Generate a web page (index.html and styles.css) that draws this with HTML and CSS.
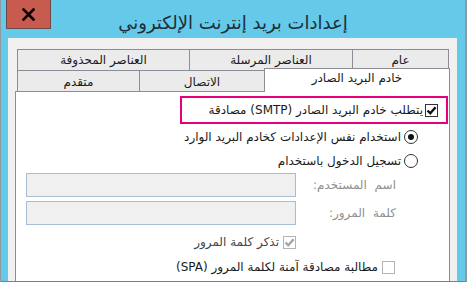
FILE: index.html
```html
<!DOCTYPE html>
<html lang="ar">
<head>
<meta charset="utf-8">
<title>إعدادات بريد إنترنت الإلكتروني</title>
<link rel="stylesheet" href="styles.css">
</head>
<body>
<div class="window">
  <div class="titlebar">
    <div class="close-cell">
      <div class="close">
        <svg width="13" height="13" viewBox="0 0 13 13"><path d="M1.5 1.5 L11.5 11.5 M11.5 1.5 L1.5 11.5" stroke="#000" stroke-width="2.6" stroke-linecap="square"/></svg>
      </div>
    </div>
    <div class="title" dir="rtl">إعدادات بريد إنترنت الإلكتروني</div>
    <div></div>
  </div>
  <div class="client" dir="rtl">
    <div class="tabs">
      <div class="tabrow top">
        <div class="tab t-general">عام</div>
        <div class="tab t-sent">العناصر المرسلة</div>
        <div class="tab t-deleted">العناصر المحذوفة</div>
      </div>
      <div class="tabrow bottom">
        <div class="tab selected">خادم البريد الصادر</div>
        <div class="tab t-conn">الاتصال</div>
        <div class="tab t-adv">متقدم</div>
      </div>
    </div>
    <div class="panel">
      <div class="highlight">
        <span class="check checked"><svg width="11" height="11" viewBox="0 0 11 11"><path d="M1.5 5.5 L4.3 8.3 L9.6 2.2" fill="none" stroke="#111" stroke-width="2.4"/></svg></span>
        <span class="label">يتطلب خادم البريد الصادر (SMTP) مصادقة</span>
      </div>
      <div class="radio-row">
        <span class="radio on"></span>
        <span class="label">استخدام نفس الإعدادات كخادم البريد الوارد</span>
      </div>
      <div class="radio-row">
        <span class="radio"></span>
        <span class="label">تسجيل الدخول باستخدام</span>
      </div>
      <div class="form">
        <div class="field-label">اسم المستخدم:</div>
        <div class="input"></div>
        <div class="field-label">كلمة المرور:</div>
        <div class="input"></div>
        <div class="cb-row remember">
          <span class="check disabled"><svg width="11" height="11" viewBox="0 0 11 11"><path d="M1.5 5.5 L4.3 8.3 L9.6 2.2" fill="none" stroke="#a6a6a6" stroke-width="2.4"/></svg></span>
          <span class="label dim">تذكر كلمة المرور</span>
        </div>
        <div class="cb-row spa">
          <span class="check light"></span>
          <span class="label">مطالبة مصادقة آمنة لكلمة المرور (SPA)</span>
        </div>
      </div>
    </div>
  </div>
</div>
</body>
</html>
```
FILE: styles.css
```css
html, body {
  margin: 0;
  padding: 0;
}
body {
  width: 467px;
  height: 282px;
  overflow: hidden;
  font-family: "DejaVu Sans", "Noto Sans", sans-serif;
  font-size: 12px;
  color: #1a1a1a;
}
.window {
  width: 467px;
  height: 282px;
  box-sizing: border-box;
  background: #65c9e9;
  border-left: 1px solid #8f9aa0;
  border-right: 2px solid #8f9aa0;
  border-bottom: 1px solid #7f7f7f;
  display: flex;
  flex-direction: column;
}
.titlebar {
  height: 38px;
  flex: none;
  display: grid;
  grid-template-columns: 1fr auto 1fr;
  align-items: start;
}
.close-cell {
  display: flex;
  padding-left: 5px;
}
.close {
  width: 45px;
  height: 29px;
  box-sizing: border-box;
  background: #c75b50;
  border: 1px solid #6e4a46;
  border-top: none;
  display: flex;
  align-items: center;
  justify-content: center;
}
.title {
  font-size: 18px;
  color: #1d2e38;
  padding-top: 11px;
  line-height: 23px;
  white-space: nowrap;
}
.client {
  flex: 1;
  margin-left: 7px;
  margin-right: 8px;
  background: #f0f0f0;
  padding: 11px 7px 0 7px;
  display: flex;
  flex-direction: column;
}
.tabs {
  margin-left: 2px;
  margin-right: 1px;
  display: flex;
  flex-direction: column;
}
.tabrow {
  display: flex;
  height: 21px;
}
.tabrow.top {
  border-top: 1px solid #8c8c96;
  border-right: 1px solid #8c8c96;
  height: 20px;
}
.tab {
  box-sizing: border-box;
  background: #ebebeb;
  border-left: 1px solid #8c8c96;
  text-align: center;
  line-height: 21px;
  white-space: nowrap;
  color: #1a1a1a;
}
.t-general { width: 96px; }
.t-sent { width: 163px; }
.t-deleted { width: 172px; }
.tabrow.bottom .tab {
  border-top: 1px solid #8c8c96;
  line-height: 22px;
}
.t-conn { width: 125px; }
.t-adv { width: 122px; }
.tabrow.bottom .tab.selected {
  position: relative;
  z-index: 1;
  width: 186px;
  height: 24px;
  margin-top: -2px;
  margin-bottom: -2px;
  margin-right: -1px;
  background: #ffffff;
  border: 1px solid #8c8c96;
  border-bottom: none;
  line-height: 19px;
}
.panel {
  flex: 1;
  background: #ffffff;
  border: 1px solid #8c8c96;
  border-bottom: none;
  padding-top: 4px;
  display: flex;
  flex-direction: column;
  align-items: flex-start;
}
.highlight {
  width: 268px;
  height: 28px;
  box-sizing: border-box;
  margin-right: 1px;
  border: 2px solid #e6007e;
  padding-right: 8px;
  display: flex;
  align-items: center;
  gap: 2px;
}
.check {
  width: 13px;
  height: 13px;
  box-sizing: border-box;
  border: 1px solid #333333;
  background: #ffffff;
  display: flex;
  align-items: center;
  justify-content: center;
  flex: none;
}
.check.disabled, .check.light {
  border-color: #b4b4b4;
}
.label {
  white-space: nowrap;
  line-height: 16px;
}
.label.dim {
  color: #444444;
}
.radio-row {
  height: 24px;
  margin-right: 31px;
  display: flex;
  align-items: center;
  gap: 3px;
}
.highlight + .radio-row { margin-top: 1px; }
.radio {
  width: 14px;
  height: 14px;
  box-sizing: border-box;
  border: 1px solid #333333;
  border-radius: 50%;
  background: #ffffff;
  display: flex;
  align-items: center;
  justify-content: center;
  flex: none;
}
.radio.on::after {
  content: "";
  width: 6px;
  height: 6px;
  border-radius: 50%;
  background: #111111;
}
.form {
  margin-right: 53px;
  display: grid;
  grid-template-columns: 100px 270px;
  grid-auto-rows: 24px;
  row-gap: 4px;
}
.field-label {
  color: #8f8f8f;
  display: flex;
  align-items: center;
  word-spacing: 4px;
  white-space: nowrap;
}
.input {
  box-sizing: border-box;
  border: 1px solid #a9bdd2;
  background: #f0f0f0;
}
.cb-row {
  display: flex;
  align-items: center;
  gap: 4px;
}
.cb-row.remember {
  grid-column: 2;
  margin-top: 2px;
}
.cb-row.spa {
  grid-column: 1 / 3;
  margin-top: -4px;
  padding-right: 1px;
}
```
